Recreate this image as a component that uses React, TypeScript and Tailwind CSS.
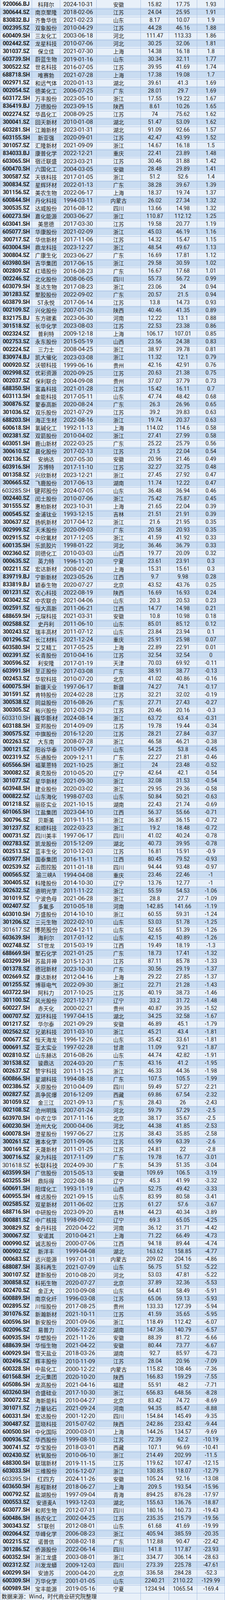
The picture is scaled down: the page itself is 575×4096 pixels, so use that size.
import React from "react";

const RAW = `920066.BJ 科拜尔 2024-10-31 安徽 15.82 17.75 1.93
300644.SZ 南京聚隆 2018-02-06 江苏 24.04 25.95 1.91
830832.BJ 齐鲁华信 2021-02-23 山东 8.17 10.07 1.9
002395.SZ 双象股份 2010-04-29 江苏 44.28 46.16 1.88
600409.SH 三友化工 2003-06-18 河北 111.47 113.33 1.86
002442.SZ 龙星科技 2010-07-06 河北 30.25 32.06 1.81
301037.SZ 保立佳 2021-07-30 上海 14.38 16.18 1.8
603739.SH 蔚蓝生物 2019-01-16 山东 30.34 32.11 1.77
300522.SZ 世名科技 2016-07-05 江苏 39.95 41.69 1.74
688718.SH 唯赛勃 2021-07-28 上海 17.38 19.08 1.7
002971.SZ 和远气体 2020-01-13 湖北 39.61 41.3 1.69
002054.SZ 德美化工 2006-07-25 广东 28.01 29.7 1.69
603172.SH 万丰股份 2023-05-10 浙江 17.55 19.22 1.67
836419.BJ 万德股份 2023-09-15 陕西 8.61 10.26 1.65
002274.SZ 华昌化工 2008-09-25 江苏 74 75.62 1.62
300041.SZ 回天新材 2010-01-08 湖北 51.47 53.09 1.62
603281.SH 江瀚新材 2023-01-31 湖北 91.09 92.66 1.57
603155.SH 新亚强 2020-09-01 江苏 42.47 43.99 1.52
301057.SZ 汇隆新材 2021-09-09 浙江 14.67 16.18 1.5
834033.BJ 康普化学 2022-12-21 重庆 22.41 23.89 1.48
603065.SH 宿迁联盛 2023-03-21 江苏 30.46 31.88 1.42
600470.SH 六国化工 2004-03-05 安徽 28.48 29.89 1.41
300587.SZ 天铁科技 2017-01-05 浙江 51.2 52.6 1.4
300834.SZ 星辉环材 2022-01-13 广东 38.28 39.67 1.39
301156.SZ 美农生物 2022-06-17 上海 18.37 19.74 1.37
600844.SH 丹化科技 1994-03-11 内蒙古 26.02 27.34 1.32
300535.SZ 达威股份 2016-08-12 四川 13.66 14.98 1.32
600273.SH 嘉化能源 2003-06-27 浙江 110.87 112.12 1.25
603041.SH 美思德 2017-03-30 江苏 19.58 20.77 1.19
605077.SH 华康股份 2021-02-09 浙江 45.03 46.19 1.16
300717.SZ 华信新材 2017-11-06 江苏 14.32 15.47 1.15
603004.SH 鼎龙科技 2023-12-27 浙江 48.54 49.67 1.13
300804.SZ 广康生化 2023-06-27 广东 16.69 17.81 1.12
603980.SH 吉华集团 2017-06-15 浙江 29.58 30.59 1.02
002809.SZ 红墙股份 2016-08-23 广东 16.67 17.68 1.01
002246.SZ 北化股份 2008-06-05 四川 55.73 56.72 0.99
603079.SH 圣达生物 2017-08-23 浙江 23.06 24 0.94
301283.SZ 聚胶股份 2022-09-02 广东 20.57 21.5 0.94
603879.SH ST永悦 2017-06-14 江苏 13.8 14.73 0.93
002109.SZ 兴化股份 2007-01-26 陕西 40.46 41.35 0.89
832175.BJ 东方碳素 2023-06-30 河南 12.22 13.1 0.88
301518.SZ 长华化学 2023-08-03 江苏 22.53 23.38 0.86
002324.SZ 普利特 2009-12-18 上海 106.17 107.01 0.85
002753.SZ 永东股份 2015-05-19 山西 23.56 24.38 0.83
002224.SZ 三力士 2008-04-25 浙江 38.97 39.78 0.81
830974.BJ 凯大催化 2023-03-08 浙江 11.32 12.1 0.79
000920.SZ 沃顿科技 1999-06-16 贵州 42.16 42.91 0.76
002998.SZ 优彩资源 2020-09-25 江苏 20.63 21.38 0.75
002037.SZ 保利联合 2004-09-08 贵州 37.07 37.79 0.73
688350.SH 富淼科技 2021-01-28 江苏 15.42 16.11 0.7
603113.SH 金能科技 2017-05-11 山东 47.74 48.42 0.68
300876.SZ 蒙泰高新 2020-08-24 广东 26.3 26.96 0.65
301036.SZ 双乐股份 2021-07-29 江苏 39.2 39.83 0.63
688203.SH 海正生材 2022-08-16 浙江 19.74 20.37 0.63
600618.SH 氯碱化工 1992-11-13 上海 114.02 114.6 0.58
002381.SZ 双箭股份 2010-04-02 浙江 27.41 27.99 0.58
603051.SH 鹿山新材 2022-03-25 广东 25.22 25.79 0.56
300610.SZ 晨化股份 2017-02-13 江苏 21.5 22.04 0.54
002136.SZ 安纳达 2007-05-30 安徽 20.96 21.46 0.49
603916.SH 苏博特 2017-11-10 江苏 32.27 32.75 0.48
001358.SZ 兴欣新材 2023-12-21 浙江 27.45 27.92 0.47
300665.SZ 飞鹿股份 2017-06-13 湖南 11.74 12.22 0.47
603285.SH 键邦股份 2024-07-05 山东 36.48 36.94 0.46
002440.SZ 闰土股份 2010-07-06 浙江 75.42 75.87 0.45
301555.SZ 惠柏新材 2023-10-31 上海 21.65 22.04 0.39
000545.SZ 金浦钛业 1993-12-15 吉林 21.51 21.91 0.39
300637.SZ 扬帆新材 2017-04-12 浙江 21.6 21.95 0.35
002999.SZ 天禾股份 2020-09-03 广东 20.58 20.93 0.35
002915.SZ 中欣氟材 2017-12-05 浙江 41.59 41.92 0.33
600135.SH 乐凯胶片 1998-01-22 河北 36.46 36.79 0.33
002360.SZ 同德化工 2010-03-03 山西 19.77 20.09 0.32
000635.SZ 英力特 1996-11-20 宁夏 23.61 23.91 0.3
002211.SZ 宏达新材 2008-02-01 上海 15.31 15.61 0.3
839719.BJ 宁新新材 2023-05-26 江西 9.7 9.98 0.28
833819.BJ 颖泰生物 2020-07-27 北京 43.52 43.76 0.25
001231.SZ 农心科技 2022-08-19 陕西 16.69 16.93 0.24
003042.SZ 中农联合 2021-04-06 山东 20.3 20.53 0.23
002591.SZ 恒大高新 2011-06-21 江西 14.77 14.98 0.21
688659.SH 元琛科技 2021-03-31 安徽 10.8 10.98 0.18
002588.SZ 史丹利 2011-06-10 山东 85.01 85.12 0.12
300243.SZ 瑞丰高材 2011-07-12 山东 23.84 23.94 0.1
001296.SZ 长江材料 2021-12-24 重庆 25.91 25.98 0.07
603580.SH 艾艾精工 2017-05-25 上海 22.89 22.91 0.01
002391.SZ 长青股份 2010-04-16 江苏 32.54 32.54 0
300596.SZ 利安隆 2017-01-19 天津 70.03 69.92 -0.11
603991.SH 至正股份 2017-03-08 广东 38.91 38.77 -0.13
002453.SZ 华软科技 2010-07-20 北京 41.02 40.86 -0.16
600075.SH 新疆天业 1997-06-17 新疆 74.27 74.1 -0.17
301591.SZ 肯特股份 2024-02-28 江苏 32.21 32.02 -0.19
300538.SZ 同益股份 2016-08-26 广东 27.71 27.43 -0.27
300305.SZ 裕兴股份 2012-03-29 江苏 20.46 20.16 -0.3
603310.SH 巍华新材 2024-08-14 浙江 63.72 63.4 -0.31
603188.SH 亚邦股份 2014-09-09 江苏 19.78 19.44 -0.34
300575.SZ 中旗股份 2016-12-20 江苏 28.21 27.84 -0.37
002263.SZ 大东南 2008-07-28 浙江 46.58 46.21 -0.38
300121.SZ 阳谷华泰 2010-09-17 山东 54.25 53.8 -0.45
002319.SZ 乐通股份 2009-12-11 广东 22.27 21.81 -0.46
605566.SH 福莱蒽特 2021-10-25 浙江 24 23.48 -0.52
300082.SZ 奥克股份 2010-05-20 辽宁 42.64 42.1 -0.54
301077.SZ 星华新材 2021-09-30 浙江 32.08 31.53 -0.54
603948.SH 建业股份 2020-03-02 浙江 29.95 29.36 -0.58
000822.SZ 山东海化 1998-07-03 山东 50.84 50.21 -0.63
001218.SZ 丽臣实业 2021-10-15 湖南 22.43 21.74 -0.69
601065.SH 江盐集团 2023-04-10 江西 56.37 55.66 -0.71
300796.SZ 贝斯美 2019-11-15 浙江 36.87 36.15 -0.72
301237.SZ 和顺科技 2022-03-23 浙江 19.2 18.48 -0.72
000731.SZ 四川美丰 1997-06-17 四川 41.02 40.24 -0.78
002783.SZ 凯龙股份 2015-12-09 湖北 40.73 39.95 -0.78
002513.SZ 蓝丰生化 2010-12-03 江苏 16.81 15.91 -0.9
603977.SH 国泰集团 2016-11-11 江西 80.45 79.52 -0.93
002539.SZ 云图控股 2011-01-18 四川 94.44 93.48 -0.97
000565.SZ 渝三峡A 1994-04-08 重庆 23.46 22.46 -1
300405.SZ 科隆股份 2014-10-30 辽宁 13.76 12.77 -1
002632.SZ 道明光学 2011-11-22 浙江 55.59 54.53 -1.06
301019.SZ 宁波色母 2021-06-28 浙江 28.8 27.7 -1.09
002407.SZ 多氟多 2010-05-18 河南 142.85 141.66 -1.19
603010.SH 万盛股份 2014-10-10 浙江 60.55 59.31 -1.24
301206.SZ 三元生物 2022-02-10 山东 53.03 51.78 -1.25
301617.SZ 博苑股份 2024-12-11 山东 52.65 51.39 -1.26
603639.SH 海利尔 2017-01-12 山东 42.15 40.89 -1.26
002748.SZ ST世龙 2015-03-19 江西 19.49 18.19 -1.3
688669.SH 聚石化学 2021-01-25 广东 18.73 17.41 -1.32
603299.SH 苏盐井神 2015-12-31 江苏 87.11 85.78 -1.33
001378.SZ 德冠新材 2023-10-30 广东 30.56 29.19 -1.37
002669.SZ 康达新材 2012-04-16 上海 29.22 27.85 -1.37
001255.SZ 博菲电气 2022-09-30 浙江 22.71 21.28 -1.43
603722.SH 阿科力 2017-10-25 江苏 40.19 38.73 -1.46
301100.SZ 风光股份 2021-12-17 辽宁 33.2 31.72 -1.48
600227.SH 赤天化 2000-02-21 贵州 40.87 39.35 -1.52
000707.SZ 双环科技 1997-04-15 湖北 34.25 32.58 -1.67
001217.SZ 华尔泰 2021-09-29 安徽 46.89 45.1 -1.79
002562.SZ 兄弟科技 2011-03-10 浙江 45.21 43.4 -1.81
000677.SZ 恒天海龙 1996-12-26 山东 35.42 33.61 -1.81
000691.SZ 亚太实业 1997-02-28 甘肃 11.09 9.21 -1.87
002810.SZ 山东赫达 2016-08-26 山东 44.74 42.82 -1.91
301538.SZ 骏鼎达 2024-03-20 广东 43.16 41.2 -1.95
002637.SZ 赞宇科技 2011-11-25 浙江 46.33 44.36 -1.98
600866.SH 星湖科技 1994-08-18 广东 107.5 105.5 -1.99
002386.SZ 天原股份 2010-04-09 四川 59.49 57.27 -2.21
002827.SZ 高争民爆 2016-12-09 西藏 69.86 67.54 -2.32
301059.SZ 金三江 2021-09-13 广东 28.43 26 -2.43
002108.SZ 沧州明珠 2007-01-24 河北 59.79 57.29 -2.5
603970.SH 中农立华 2017-11-16 北京 38.17 35.67 -2.5
600230.SH 沧州大化 2000-04-06 河北 44.38 41.85 -2.53
600078.SH 澄星股份 1997-06-27 江苏 38.43 35.85 -2.58
300261.SZ 雅本化学 2011-09-06 江苏 65.99 63.39 -2.6
300169.SZ 天晟新材 2011-01-25 江苏 24.81 22 -2.8
300716.SZ 泉为科技 2017-11-09 广东 19.78 16.77 -3.01
301618.SZ 长联科技 2024-09-30 广东 54.39 51.35 -3.04
603599.SH 广信股份 2015-05-13 安徽 109.69 106.5 -3.19
603255.SH 鼎际得 2022-08-18 辽宁 45.3 41.99 -3.32
600691.SH 阳煤化工 1993-11-19 山西 52.75 49.42 -3.33
600955.SH 维远股份 2021-09-15 山东 83.99 80.58 -3.41
002585.SZ 双星新材 2011-06-02 江苏 61.27 57.6 -3.67
688716.SH 中研股份 2023-09-20 吉林 44.23 40.34 -3.89
000881.SZ 中广核技 1998-09-02 辽宁 69.3 65.05 -4.25
300829.SZ 金丹科技 2020-04-22 河南 36.12 31.71 -4.42
300067.SZ 安诺其 2010-04-21 上海 71.22 66.49 -4.73
000990.SZ 诚志股份 2000-07-06 江西 94.18 89.44 -4.74
000902.SZ 新洋丰 1999-04-08 湖北 163.62 158.85 -4.77
000683.SZ 远兴能源 1997-01-31 内蒙古 209.02 204.16 -4.86
688087.SH 英科再生 2021-07-09 山东 56.75 51.52 -5.22
300107.SZ 建新股份 2010-08-20 河北 53.03 47.81 -5.22
300858.SZ 科拓生物 2020-07-27 北京 37.89 32.36 -5.53
002470.SZ 金正大 2010-09-08 山东 64.41 58.49 -5.91
600889.SH 南京化纤 1996-03-08 江苏 65.06 59.13 -5.93
002895.SZ 川恒股份 2017-08-25 贵州 133.33 127.39 -5.94
301076.SZ 新瀚新材 2021-10-11 江苏 41.59 35.65 -5.95
600596.SH 新安股份 2001-09-06 浙江 118.49 112.42 -6.07
002096.SZ 易普力 2006-12-22 湖南 147.36 140.79 -6.57
600935.SH 华塑股份 2021-11-26 安徽 88.39 81.72 -6.66
688639.SH 华恒生物 2021-04-22 安徽 80.44 73.77 -6.67
600929.SH 雪天盐业 2018-03-26 湖南 92.7 85.97 -6.73
002496.SZ 辉丰股份 2010-11-09 江苏 28.04 20.96 -7.09
600328.SH 中盐化工 2000-12-22 内蒙古 115.82 108.46 -7.36
601568.SH 北元集团 2020-10-20 陕西 166.83 159.29 -7.55
605086.SH 龙高股份 2021-04-16 福建 55.91 48.2 -7.71
603260.SH 合盛硅业 2017-10-30 浙江 656.83 648.56 -8.28
300072.SZ 海新能科 2010-04-27 北京 83.42 74.72 -8.69
301071.SZ 力量钻石 2021-09-24 河南 94.35 85.47 -8.88
600331.SH 宏达股份 2001-12-20 四川 154.84 145.49 -9.35
300487.SZ 蓝晓科技 2015-07-02 陕西 242.86 233.42 -9.44
600500.SH 中化国际 2000-03-01 上海 144.26 134.57 -9.69
000936.SZ 华西股份 1999-08-10 江苏 72.39 62.2 -10.19
300741.SZ 华宝股份 2018-03-01 西藏 107.1 96.69 -10.41
002430.SZ 杭氧股份 2010-06-10 浙江 214.49 202.99 -11.5
688300.SH 联瑞新材 2019-11-15 江苏 119.62 107.47 -12.15
603033.SH 三维股份 2016-12-07 浙江 130.85 118.07 -12.79
603395.SH 红四方 2024-11-26 安徽 105.24 92.16 -13.08
603650.SH 彤程新材 2018-06-27 上海 209.5 193.54 -15.96
000792.SZ 盐湖股份 1997-09-04 青海 894.25 876.28 -17.97
000553.SZ 安道麦A 1993-12-03 湖北 155.63 136.76 -18.87
603077.SH 和邦生物 2012-07-31 四川 180.16 160.73 -19.43
600486.SH 扬农化工 2002-04-25 江苏 235.35 215.79 -19.56
300343.SZ ST联创 2012-08-01 山东 61.68 41.69 -19.99
002064.SZ 华峰化学 2006-08-23 浙江 405.94 385.59 -20.35
002215.SZ 诺普信 2008-02-18 广东 112.88 90.47 -22.42
301286.SZ 侨源股份 2022-06-14 四川 141.8 117.87 -23.93
600352.SH 浙江龙盛 2003-08-01 浙江 334.77 306.14 -28.63
002312.SZ 川发龙蟒 2009-12-03 四川 273.39 225.78 -47.61
600299.SH 安迪苏 2000-04-20 北京 336.58 284.28 -52.3
600309.SH 万华化学 2001-01-05 山东 2240.21 2110.22 -129.99
600989.SH 宝丰能源 2019-05-16 宁夏 1234.94 1065.54 -169.4`;

// 新上市的几只，截图里字体不是粗体
const PLAIN = new Set(["603285.SH", "603310.SH", "301617.SZ", "301618.SZ", "603395.SH"]);

const rows = RAW.trim()
  .split("\n")
  .map((l) => l.trim().split(/\s+/));

const cell = "flex items-center justify-center border-r border-b border-[#a7bfe2] whitespace-nowrap";

export default function App() {
  return (
    <div className="w-[575px] bg-white font-['Roboto','Noto_Sans_CJK_SC',sans-serif] text-[#1c1c1c]">
      <div className="border-l border-[#a7bfe2]">
        {rows.map((r, i) => {
          const plain = PLAIN.has(r[0]);
          const shifted = i >= 156;
          return (
            <div
              key={r[0] + i}
              className={`grid h-[20.08px] grid-cols-[81.4px_71.5px_92.8px_113.7px_71.4px_72.2px_1fr] ${
                i % 2 === 0 ? "bg-[#e8f0f9]" : "bg-[#c9dcf1]"
              }`}
            >
              <div className={`${cell} ${plain ? "text-[15px] font-normal tracking-[-0.2px]" : "text-[14.4px] font-bold tracking-[-0.3px]"}`}>
                {r[0]}
              </div>
              <div className={`${cell} font-['Noto_Sans_CJK_SC',sans-serif] ${plain ? "text-[15px]" : "text-[13.9px]"}`}>
                {r[1]}
              </div>
              <div className={`${cell} text-[15px] ${shifted ? "pl-[11px]" : ""}`}>{r[2]}</div>
              <div className={`${cell} font-['Noto_Sans_CJK_SC',sans-serif] text-[13.8px]`}>{r[3]}</div>
              <div className={`${cell} text-[14px]`}>{r[4]}</div>
              <div className={`${cell} text-[14px]`}>{r[5]}</div>
              <div className={`${cell} text-[14px]`}>{r[6]}</div>
            </div>
          );
        })}
        <div className="grid h-[20.08px] grid-cols-[359.4px_71.4px_72.2px_1fr] bg-[#e8f0f9]">
          <div className="flex items-center border-r border-[#a7bfe2] pl-[3px] font-['Noto_Sans_CJK_SC',sans-serif] text-[14px] whitespace-nowrap">
            数据来源：Wind，时代商业研究院整理
          </div>
          <div className="border-r border-[#a7bfe2]" />
          <div className="border-r border-[#a7bfe2]" />
          <div className="border-r border-[#a7bfe2]" />
        </div>
      </div>
    </div>
  );
}
